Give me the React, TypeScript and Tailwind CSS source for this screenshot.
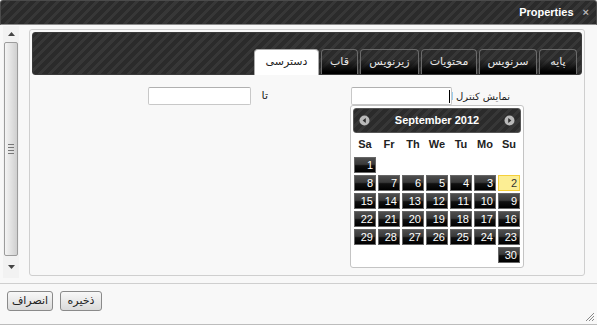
import React from 'react';

const stripes =
  'bg-[image:repeating-linear-gradient(135deg,#2b2b2b_0px,#2b2b2b_4px,#373737_4px,#373737_7px)]';

const tabs = [
  { label: 'پایه', w: 'w-[38px]' },
  { label: 'سرنویس', w: 'w-[58px]' },
  { label: 'محتویات', w: 'w-[56px]' },
  { label: 'زیرنویس', w: 'w-[59px]' },
  { label: 'قاب', w: 'w-[37px]' },
  { label: 'دسترسی', w: 'w-[65px]', active: true },
];

// rtl order: Su Mo Tu We Th Fr Sa
const weekDays = ['Su', 'Mo', 'Tu', 'We', 'Th', 'Fr', 'Sa'];
const weeks: (number | null)[][] = [
  [null, null, null, null, null, null, 1],
  [2, 3, 4, 5, 6, 7, 8],
  [9, 10, 11, 12, 13, 14, 15],
  [16, 17, 18, 19, 20, 21, 22],
  [23, 24, 25, 26, 27, 28, 29],
  [30, null, null, null, null, null, null],
];

function NavIcon({ dir }: { dir: 'prev' | 'next' }) {
  return (
    <svg width="11" height="11" viewBox="0 0 11 11">
      <circle cx="5.5" cy="5.5" r="5" fill="#b9b9b9" />
      {dir === 'prev' ? (
        <polygon points="6.8,3 3.6,5.5 6.8,8" fill="#2e2e2e" />
      ) : (
        <polygon points="4.2,3 7.4,5.5 4.2,8" fill="#2e2e2e" />
      )}
    </svg>
  );
}

function Calendar() {
  return (
    <div className="absolute top-[18px] left-[-1px] w-[174px] h-[163px] bg-white border border-[#c4c4c4] rounded-[3px] p-[2px]">
      <div dir="ltr" className={`h-[25px] rounded-[3px] border border-[#555] ${stripes} flex items-center justify-between px-[5px]`}>
        <NavIcon dir="prev" />
        <span className="text-white font-bold text-[11px] font-['Liberation_Sans',sans-serif]">September 2012</span>
        <NavIcon dir="next" />
      </div>
      <div dir="rtl" className="grid grid-cols-7 gap-x-[2px] px-px h-[24px] items-center pb-px font-['Liberation_Sans',sans-serif]">
        {weekDays.map((d) => (
          <div key={d} className="text-center font-bold text-[11px] text-[#222]">
            {d}
          </div>
        ))}
      </div>
      <div dir="rtl" className="grid grid-cols-7 gap-x-[2px] gap-y-[2px] px-px font-['Liberation_Sans',sans-serif]">
        {weeks.flat().map((n, i) =>
          n === null ? (
            <div key={i} className="h-[16px]" />
          ) : n === 2 ? (
            <div
              key={i}
              className="h-[16px] border border-[#f5cf3a] bg-[#fcee94] text-[#333] text-right pr-[2px] text-[11px] leading-[14px]"
            >
              {n}
            </div>
          ) : (
            <div
              key={i}
              className="h-[16px] border border-[#666] bg-[image:linear-gradient(to_bottom,#4e4e4e_0%,#393939_45%,#111_55%,#000_100%)] text-white text-right pr-[2px] text-[11px] leading-[14px]"
            >
              {n}
            </div>
          )
        )}
      </div>
    </div>
  );
}

function Scrollbar() {
  return (
    <div className="mt-px w-[16px] h-[252px] bg-[#f2f2f2] flex flex-col">
      <div className="h-[16px] flex items-center justify-center">
        <svg width="7" height="4" viewBox="0 0 7 4">
          <polygon points="0,4 3.5,0 7,4" fill="#444" />
        </svg>
      </div>
      <div className="flex-1 mx-px rounded-[2px] border border-[#9c9c9c] bg-[image:linear-gradient(to_right,#f4f4f4,#dedede_60%,#cfcfcf)] flex flex-col items-center justify-center gap-[2px]">
        <div className="w-[6px] h-px bg-[#777]" />
        <div className="w-[6px] h-px bg-[#777]" />
        <div className="w-[6px] h-px bg-[#777]" />
        <div className="w-[6px] h-px bg-[#777]" />
      </div>
      <div className="h-[22px] flex items-center justify-center">
        <svg width="7" height="4" viewBox="0 0 7 4">
          <polygon points="0,0 3.5,4 7,0" fill="#444" />
        </svg>
      </div>
    </div>
  );
}

export default function App() {
  return (
    <div className="relative w-[597px] h-[325px] bg-[#f8f8f8] border-b border-[#bcbcbc] overflow-hidden font-['Liberation_Sans','DejaVu_Sans',sans-serif] text-[11px] text-[#222]">
      {/* title bar */}
      <div className={`h-[25px] rounded-t-[3px] border border-[#4a4a4a] border-b-[#8c8c8c] ${stripes} flex items-center justify-end pr-[7px]`}>
        <span className="text-white font-bold text-[11px]">Properties</span>
        <span className="ml-[9px] text-[#b5b5b5] text-[11px] font-bold leading-none">×</span>
      </div>

      {/* body */}
      <div className="flex h-[258px] pl-[3px]">
        <Scrollbar />
        <div className="ml-[10px] mt-[4px] w-[556px] h-[247px] border border-[#cfcfcf] rounded-[3px] p-[2px] flex flex-col">
          <div className={`h-[43px] rounded-[3px] border border-[#3a3a3a] ${stripes} flex items-end`}>
            <div dir="rtl" className="flex items-end gap-[2px] pr-[4px] w-full -mb-px">
              {tabs.map((t) =>
                t.active ? (
                  <div
                    key={t.label}
                    className={`${t.w} h-[26px] rounded-t-[4px] border border-b-0 border-[#aaa] bg-white text-[#222] flex items-center justify-center text-[11px] font-['DejaVu_Sans',sans-serif]`}
                  >
                    {t.label}
                  </div>
                ) : (
                  <div
                    key={t.label}
                    className={`${t.w} h-[25px] mb-px rounded-t-[4px] border border-b-0 border-[#6a6a6a] bg-[image:linear-gradient(to_bottom,rgba(0,0,0,0)_40%,#000_92%)] text-[#e6e6e6] flex items-center justify-center text-[11px] font-['DejaVu_Sans',sans-serif]`}
                  >
                    {t.label}
                  </div>
                )
              )}
            </div>
          </div>

          <div dir="rtl" className="mt-[12px] h-[18px] flex items-center pr-[72px] font-['DejaVu_Sans',sans-serif]">
            <div className="w-[58px] text-right text-[10px] whitespace-nowrap">نمایش کنترل از</div>
            <div className="relative">
              <div className="w-[101px] h-[18px] bg-white border border-[#c8c8c8] border-t-[#b0b0b0] rounded-[2px] flex items-center pr-[1px]">
                <div className="w-px h-[13px] bg-black" />
              </div>
              <Calendar />
            </div>
            <div className="mr-[83px] w-[17px] text-right text-[11px]">تا</div>
            <div className="w-[103px] h-[18px] bg-white border border-[#c8c8c8] border-t-[#b0b0b0] rounded-[2px]" />
          </div>
        </div>
      </div>

      {/* footer */}
      <div className="border-t border-[#cfcfcf] flex gap-[7px] pl-[7px] pt-[7px] font-['DejaVu_Sans',sans-serif]">
        <button className="w-[46px] h-[20px] border border-[#8a8a8a] rounded-[3px] bg-[image:linear-gradient(to_bottom,#f8f8f8,#dadada)] text-[11px] text-[#222] flex items-center justify-center">
          انصراف
        </button>
        <button className="w-[42px] h-[20px] border border-[#8a8a8a] rounded-[3px] bg-[image:linear-gradient(to_bottom,#f8f8f8,#dadada)] text-[11px] text-[#222] flex items-center justify-center">
          ذخیره
        </button>
      </div>

      {/* resize grip */}
      <svg className="absolute right-[3px] bottom-[3px]" width="9" height="9" viewBox="0 0 9 9">
        <line x1="1" y1="9" x2="9" y2="1" stroke="#888" strokeWidth="1" />
        <line x1="4" y1="9" x2="9" y2="4" stroke="#888" strokeWidth="1" />
        <line x1="7" y1="9" x2="9" y2="7" stroke="#888" strokeWidth="1" />
      </svg>
    </div>
  );
}
